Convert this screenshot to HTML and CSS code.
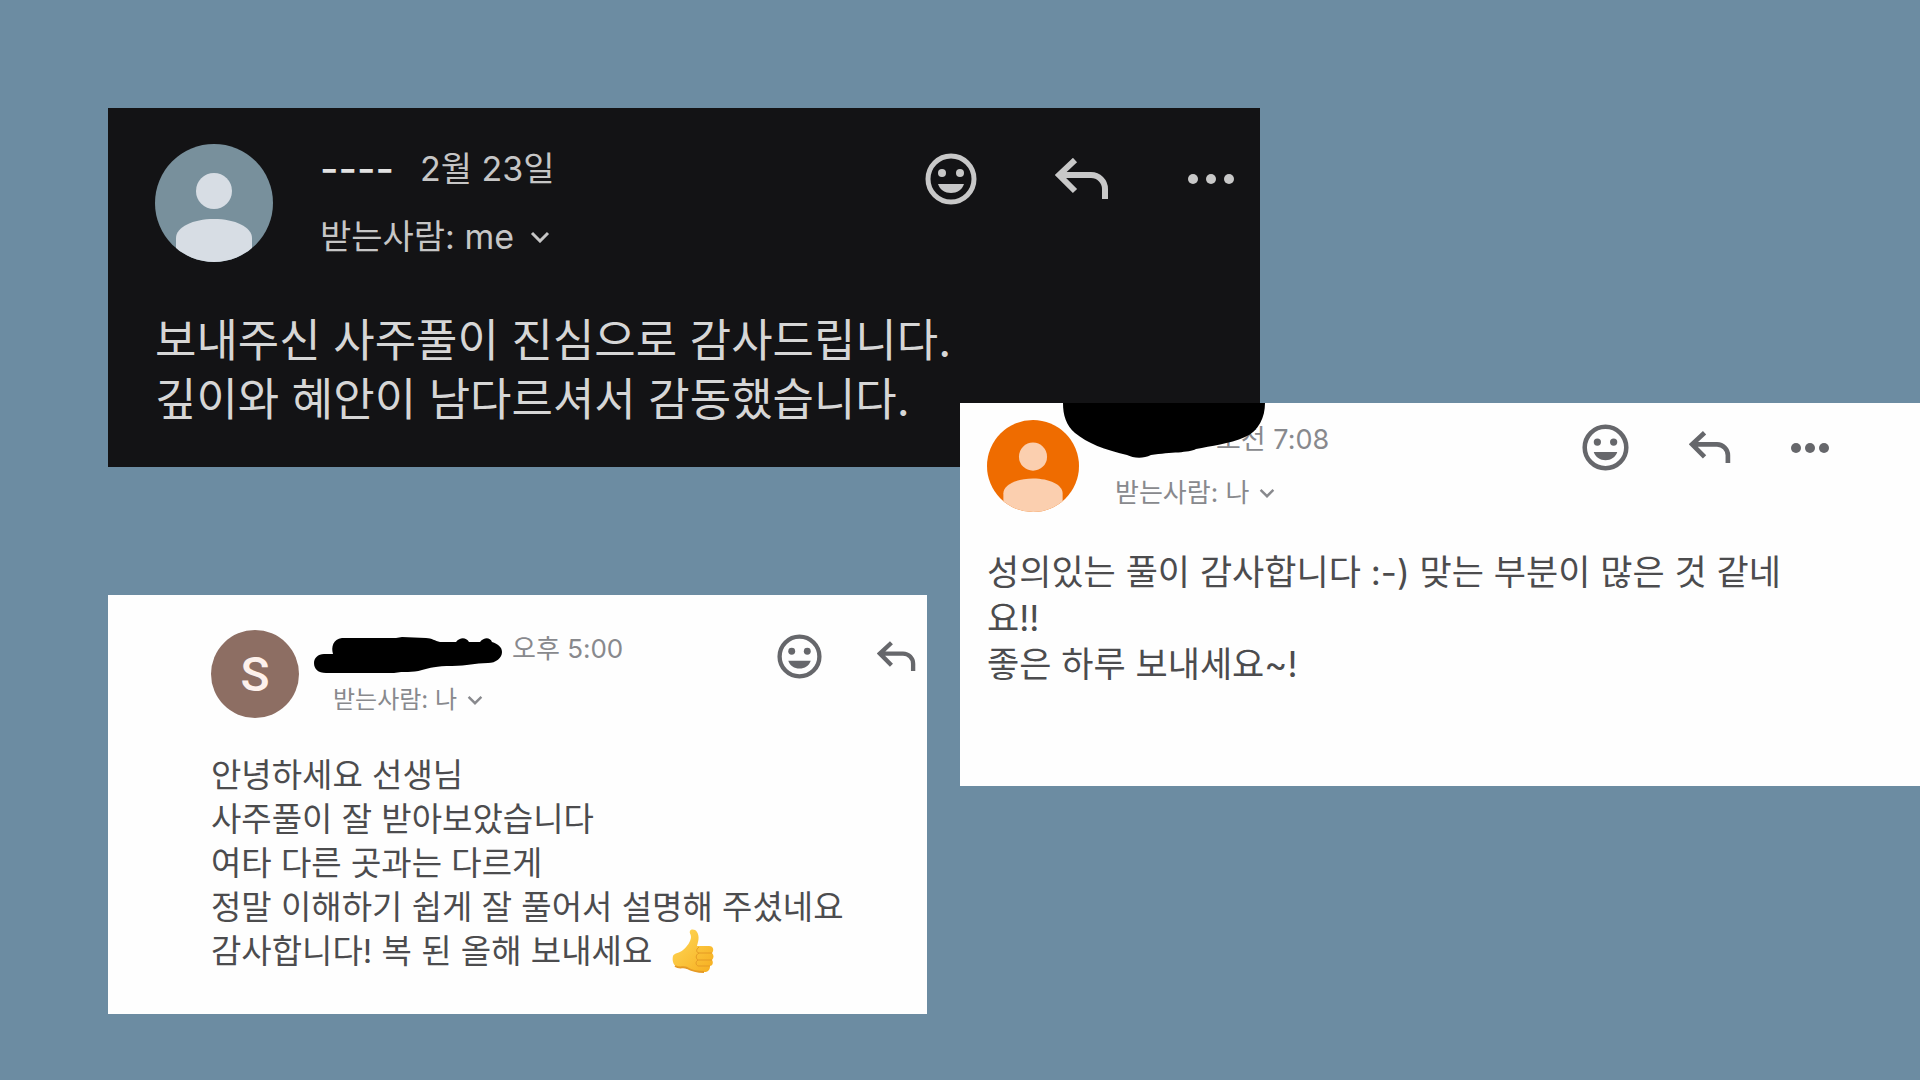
FILE: index.html
```html
<!DOCTYPE html>
<html lang="ko">
<head>
    <meta charset="UTF-8">
    <meta name="viewport" content="width=device-width, initial-scale=1.0">
    <title>고객 후기</title>
    <link rel="stylesheet" href="styles.css">
</head>
<body>
    <!-- shared icons -->
    <svg class="sprite" aria-hidden="true">
        <symbol id="smile" viewBox="0 0 52 52">
            <circle cx="26" cy="26" r="23" fill="none" stroke="currentColor" stroke-width="5"/>
            <circle cx="17" cy="20" r="4" fill="currentColor"/>
            <circle cx="35" cy="20" r="4" fill="currentColor"/>
            <path d="M13 31h26c-2 6-7 9-13 9s-11-3-13-9z" fill="currentColor"/>
        </symbol>
        <symbol id="reply" viewBox="0 0 54 42">
            <path d="M20 2 4 17 20 33M4 17H36a14 14 0 0 1 14 14V41" fill="none" stroke="currentColor" stroke-width="6"/>
        </symbol>
        <symbol id="more" viewBox="0 0 48 12">
            <circle cx="6" cy="6" r="5" fill="currentColor"/>
            <circle cx="24" cy="6" r="5" fill="currentColor"/>
            <circle cx="42" cy="6" r="5" fill="currentColor"/>
        </symbol>
        <symbol id="more-tight" viewBox="0 0 38 12">
            <circle cx="5" cy="6" r="5" fill="currentColor"/>
            <circle cx="19" cy="6" r="5" fill="currentColor"/>
            <circle cx="33" cy="6" r="5" fill="currentColor"/>
        </symbol>
        <symbol id="chevron" viewBox="0 0 20 12">
            <path d="M2 2l8 8 8-8" fill="none" stroke="currentColor" stroke-width="3"/>
        </symbol>
        <symbol id="person" viewBox="0 0 118 118">
            <circle cx="59" cy="47" r="18" fill="currentColor"/>
            <path d="M21 118V94c0-11 17-19 38-19s38 8 38 19v24z" fill="currentColor"/>
        </symbol>
    </svg>

    <main class="board">
        <article class="mail mail-dark">
            <header class="mail-head">
                <div class="avatar avatar-blue"><svg><use href="#person"/></svg></div>
                <div class="info">
                    <div class="line"><span class="dashes">----</span><time>2월 23일</time></div>
                    <button class="line to">받는사람: me <svg class="chevron"><use href="#chevron"/></svg></button>
                </div>
                <div class="actions">
                    <button aria-label="이모지 반응"><svg class="smile"><use href="#smile"/></svg></button>
                    <button aria-label="답장"><svg class="reply"><use href="#reply"/></svg></button>
                    <button aria-label="더보기"><svg class="more"><use href="#more"/></svg></button>
                </div>
            </header>
            <p class="message">보내주신 사주풀이 진심으로 감사드립니다.<br>깊이와 혜안이 남다르셔서 감동했습니다.</p>
        </article>

        <article class="mail mail-right">
            <svg class="scribble-big" viewBox="0 0 202 56" aria-hidden="true">
                <path d="M0 0H202C202 14 196 28 182 34C166 41 148 43 133 46C126 50 108 49 88 52C80 56 70 55 64 52C42 47 24 40 12 30C3 22 0 12 0 0z"/>
            </svg>
            <header class="mail-head">
                <div class="avatar avatar-orange"><svg><use href="#person"/></svg></div>
                <div class="info">
                    <div class="line"><span class="sender"></span><time>오전 7:08</time></div>
                    <button class="line to">받는사람: 나 <svg class="chevron"><use href="#chevron"/></svg></button>
                </div>
                <div class="actions">
                    <button aria-label="이모지 반응"><svg class="smile"><use href="#smile"/></svg></button>
                    <button aria-label="답장"><svg class="reply"><use href="#reply"/></svg></button>
                    <button aria-label="더보기"><svg class="more"><use href="#more-tight"/></svg></button>
                </div>
            </header>
            <p class="message">성의있는 풀이 감사합니다 :-) 맞는 부분이 많은 것 같네<br>요!!<br>좋은 하루 보내세요~!</p>
        </article>

        <article class="mail mail-left">
            <header class="mail-head">
                <div class="avatar avatar-brown">S</div>
                <div class="info">
                    <div class="line">
                        <span class="sender">
                            <svg class="scribble" viewBox="0 0 188 37" aria-hidden="true">
                                <path d="M28 1H82L88 0 112 1C118 1 121 4 126 5L142 5C146 0 152 0 155 5L166 5C170 0 176 0 178 5C184 7 188 10 188 15C188 21 182 26 174 26C160 26 154 29 138 29C122 29 116 31 108 33C98 36 90 34 80 36H12C4 36 0 32 0 26C0 21 4 17 10 17H19C17 10 19 2 28 1z"/>
                            </svg>
                        </span>
                        <time>오후 5:00</time>
                    </div>
                    <button class="line to">받는사람: 나 <svg class="chevron"><use href="#chevron"/></svg></button>
                </div>
                <div class="actions">
                    <button aria-label="이모지 반응"><svg class="smile"><use href="#smile"/></svg></button>
                    <button aria-label="답장"><svg class="reply"><use href="#reply"/></svg></button>
                </div>
            </header>
            <p class="message">안녕하세요 선생님<br>사주풀이 잘 받아보았습니다<br>여타 다른 곳과는 다르게<br>정말 이해하기 쉽게 잘 풀어서 설명해 주셨네요<br>감사합니다! 복 된 올해 보내세요
                <svg class="thumb" viewBox="0 0 42 44" role="img" aria-label="좋아요">
                    <defs>
                        <linearGradient id="skin" x1="0" y1="0" x2="1" y2="1">
                            <stop offset="0" stop-color="#ffd95a"/>
                            <stop offset="1" stop-color="#f6ae1e"/>
                        </linearGradient>
                    </defs>
                    <path d="M18 2C19 0 23 0 25 3C28 8 26 13 25 17L37 17C42 17 42 22 40 24C42 26 42 29 40 31C42 34 40 37 38 37C38 41 36 43 32 43C26 43 20 42 15 39C11 38 8 40 5 38C1 36 0 31 1 27C2 24 8 24 11 21C15 18 19 12 19 8C19 5 17 4 18 2z" fill="url(#skin)"/>
                    <path d="M27 24H40M26 31H40M26 37H38M27 18C23 21 25 24 27 24C23 26 24 30 26 31C23 33 24 36 26 37" fill="none" stroke="#e59a25"/>
                    <path d="M3 37C8 40 11 37 15 39C20 42 26 43 32 43" fill="none" stroke="#e59a25" stroke-width="2"/>
                </svg>
            </p>
        </article>
    </main>
</body>
</html>
```

FILE: styles.css
```css
* {
    box-sizing: border-box;
}
body {
    margin: 0;
    background-color: #6c8ca2;
    font-family: Inter, "Noto Sans CJK KR", sans-serif;
}
.sprite {
    position: absolute;
    width: 0;
    height: 0;
}
svg {
    display: block;
}
button {
    padding: 0;
    border: 0;
    background: none;
    color: inherit;
    font: inherit;
    cursor: pointer;
}

/* overlapping collage: the cards share grid cells */
.board {
    display: grid;
    grid-template-columns: 108fr 819fr 33fr 300fr 660fr;
    grid-template-rows: 108px 295px 64px 128px 191px 228px;
    min-height: 100vh;
    align-content: start;
}
.mail {
    position: relative;
    min-width: 0;
    background-color: #fefefe;
    color: #4c4c4e;
}
.mail-dark {
    grid-area: 2 / 2 / 4 / 5;
    padding: 36px 25px 36px 47px;
    background-color: #131315;
    color: #d6d6d6;
}
.mail-right {
    grid-area: 3 / 4 / 6 / 6;
    padding: 17px 91px 17px 27px;
}
.mail-left {
    grid-area: 5 / 2 / 7 / 3;
    padding: 35px 11px 35px 103px;
}

.mail-head {
    display: flex;
    align-items: center;
}
.avatar {
    flex: none;
    border-radius: 50%;
    overflow: hidden;
}
.avatar svg {
    width: 100%;
    height: 100%;
}
.avatar-blue {
    width: 118px;
    height: 118px;
    background-color: #78909c;
    color: #d7dde4;
}
.avatar-orange {
    width: 92px;
    height: 92px;
    background-color: #ef6c00;
    color: #fbcfaf;
}
.avatar-brown {
    width: 88px;
    height: 88px;
    background-color: #8d6e63;
    color: #fdf1ec;
    font-family: Roboto, sans-serif;
    font-size: 48px;
    font-weight: 500;
    line-height: 90px;
    text-align: center;
}

.info {
    display: flex;
    flex-direction: column;
    align-items: flex-start;
    color: #88898d;
}
.line {
    display: flex;
    align-items: center;
    white-space: nowrap;
    line-height: 30px;
}
.sender {
    position: relative;
    align-self: stretch;
}
.actions {
    display: flex;
    align-items: center;
    align-self: flex-start;
    margin-left: auto;
    color: #66676b;
}
.chevron {
    width: 16px;
    height: 10px;
    margin-left: 10px;
}
.message {
    margin: 0;
    white-space: nowrap;
}

/* dark card */
.mail-dark .info {
    gap: 28px;
    margin-left: 47px;
    color: #c6c6c6;
    font-size: 34px;
}
.mail-dark .line {
    line-height: 40px;
}
.mail-dark time {
    margin-left: 26px;
}
.dashes {
    color: #e2e2e2;
    font-size: 40px;
    font-weight: 500;
}
.mail-dark .chevron {
    width: 20px;
    height: 12px;
    margin-left: 16px;
}
.mail-dark .actions {
    gap: 78px;
    margin-top: 9px;
    color: #c8c8c8;
}
.mail-dark .smile {
    width: 52px;
    height: 52px;
}
.mail-dark .reply {
    width: 54px;
    height: 42px;
}
.mail-dark .more {
    width: 48px;
    height: 12px;
}
.mail-dark .message {
    margin-top: 49px;
    font-size: 45px;
    line-height: 59px;
}

/* right card */
.mail-right .info {
    gap: 23px;
    margin-left: 36px;
    font-size: 26px;
}
.mail-right .sender {
    width: 101px;
}
.mail-right time {
    font-size: 27px;
}
.mail-right .actions {
    gap: 60px;
    margin-top: 4px;
}
.mail-right .smile {
    width: 47px;
    height: 47px;
}
.mail-right .reply {
    width: 42px;
    height: 33px;
}
.mail-right .more {
    width: 38px;
    height: 12px;
}
.mail-right .message {
    margin-top: 37px;
    font-size: 35px;
    line-height: 46px;
}
.scribble-big {
    position: absolute;
    top: 0;
    left: 103px;
    width: 202px;
    height: 56px;
}

/* left card */
.mail-left .info {
    gap: 21px;
    margin-left: 34px;
    font-size: 24px;
}
.mail-left .sender {
    width: 179px;
}
.mail-left time {
    font-size: 26px;
}
.scribble {
    position: absolute;
    top: 3px;
    left: -19px;
    width: 188px;
    height: 37px;
}
.mail-left .actions {
    gap: 55px;
    margin-top: 4px;
}
.mail-left .smile {
    width: 45px;
    height: 45px;
}
.mail-left .reply {
    width: 39px;
    height: 31px;
}
.mail-left .message {
    margin-top: 35px;
    font-size: 33px;
    line-height: 44px;
}
.thumb {
    display: inline-block;
    width: 42px;
    height: 44px;
    margin: -6px 0 0 10px;
    vertical-align: middle;
}
```
